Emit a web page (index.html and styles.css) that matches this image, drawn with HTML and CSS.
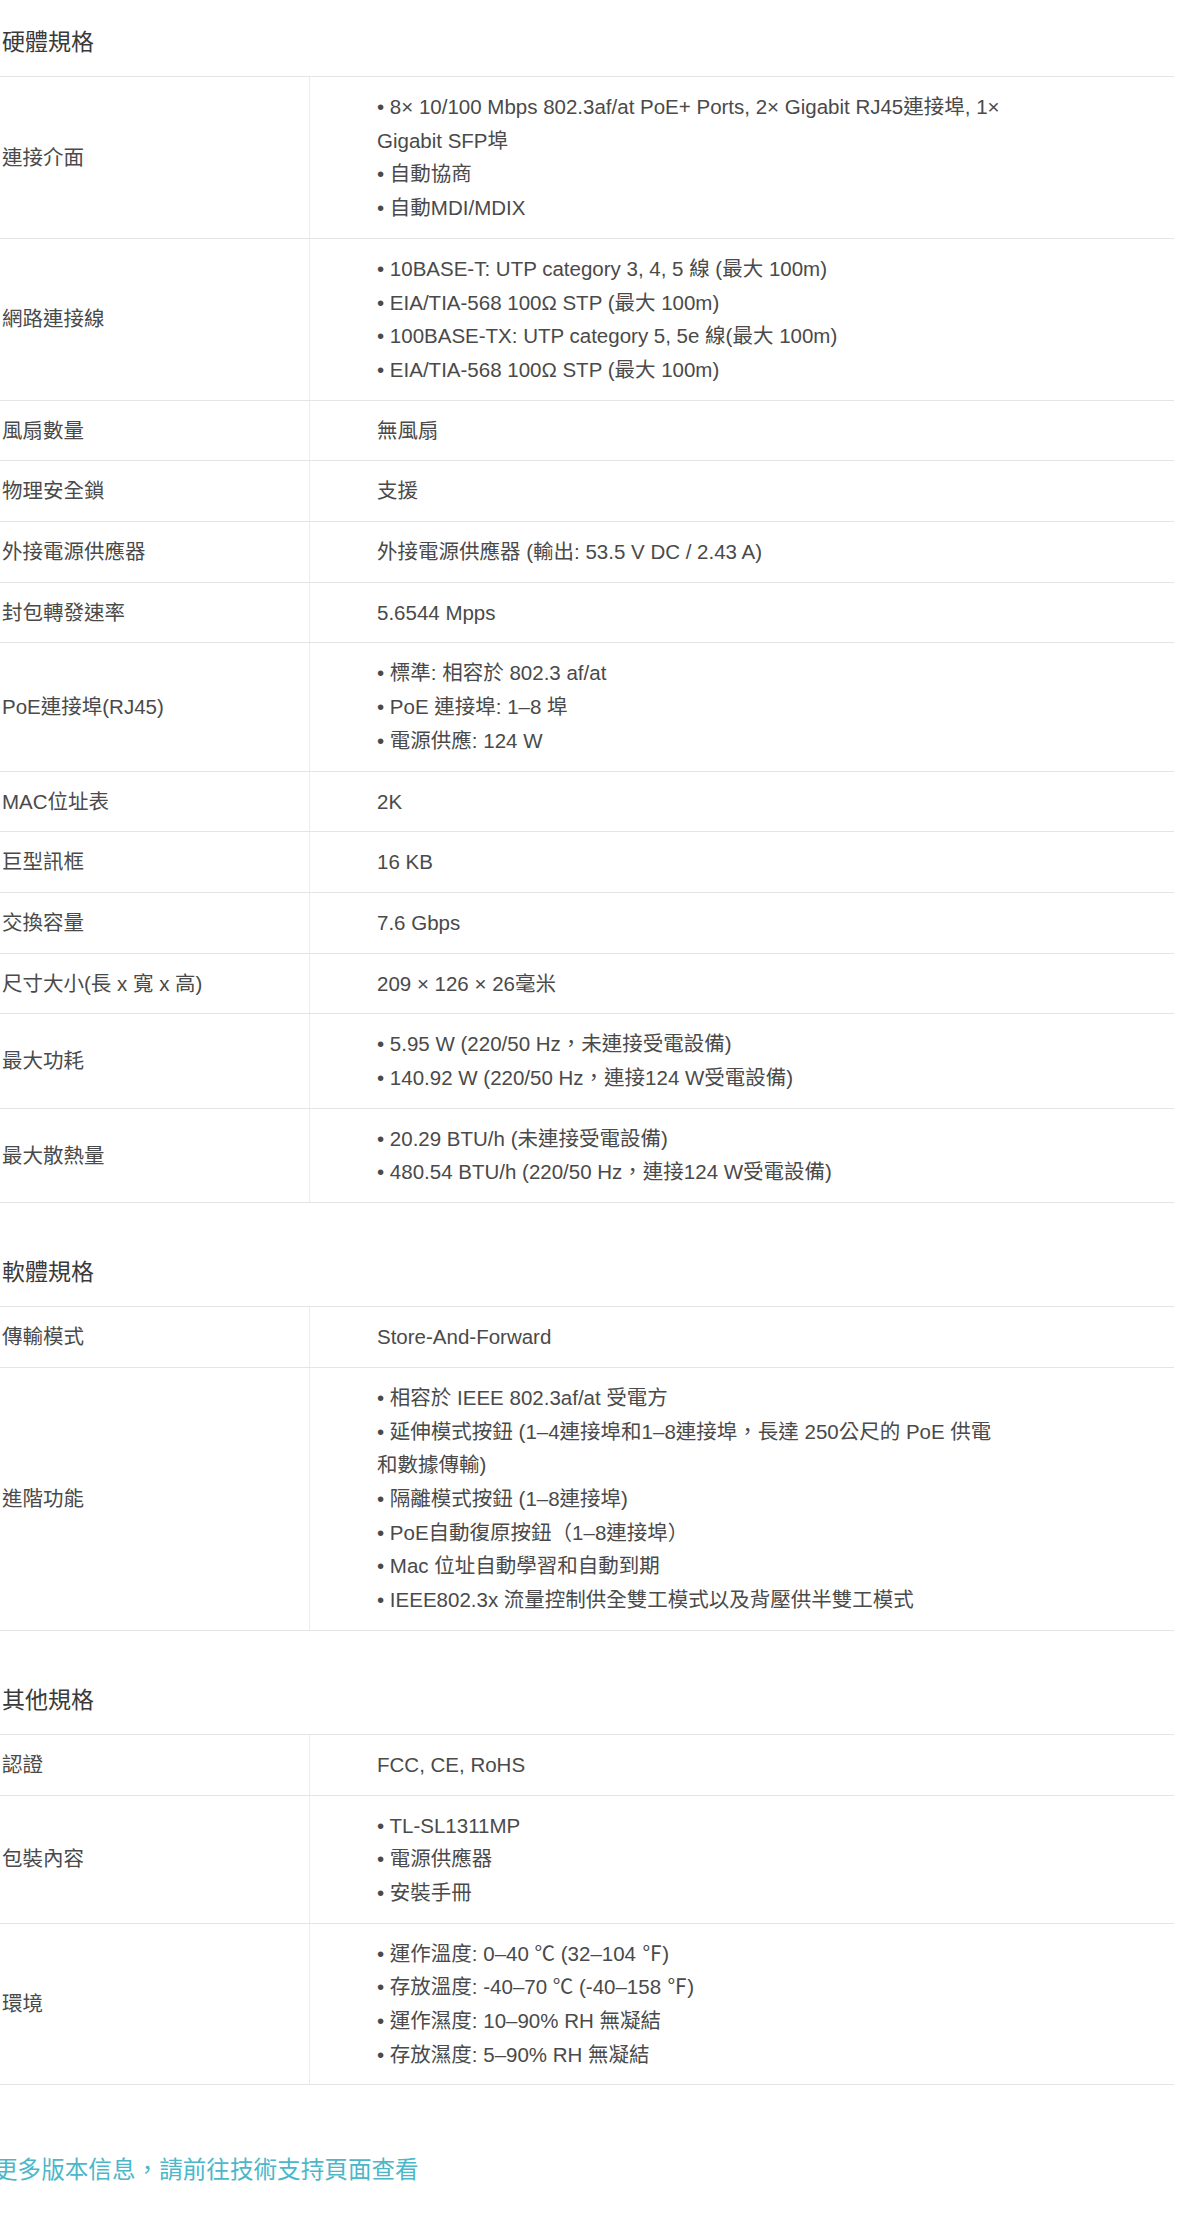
FILE: index.html
```html
<!DOCTYPE html>
<html lang="zh-Hant">
<head>
  <meta charset="UTF-8">
  <title>TL-SL1311MP 規格</title>
  <link rel="stylesheet" href="styles.css">
</head>
<body>

  <div class="specs">

    <!-- 硬體 -->
    <section class="spec-group">
      <h2 class="spec-title">硬體規格</h2>
      <div class="spec-table">
        <div class="spec-row">
          <div class="spec-name">連接介面</div>
          <div class="spec-value">
            <div>• 8× 10/100 Mbps 802.3af/at PoE+ Ports, 2× Gigabit RJ45連接埠, 1× Gigabit SFP埠</div>
            <div>• 自動協商</div>
            <div>• 自動MDI/MDIX</div>
          </div>
        </div>
        <div class="spec-row">
          <div class="spec-name">網路連接線</div>
          <div class="spec-value">
            <div>• 10BASE-T: UTP category 3, 4, 5 線 (最大 100m)</div>
            <div>• EIA/TIA-568 100Ω STP (最大 100m)</div>
            <div>• 100BASE-TX: UTP category 5, 5e 線(最大 100m)</div>
            <div>• EIA/TIA-568 100Ω STP (最大 100m)</div>
          </div>
        </div>
        <div class="spec-row">
          <div class="spec-name">風扇數量</div>
          <div class="spec-value">無風扇</div>
        </div>
        <div class="spec-row">
          <div class="spec-name">物理安全鎖</div>
          <div class="spec-value">支援</div>
        </div>
        <div class="spec-row">
          <div class="spec-name">外接電源供應器</div>
          <div class="spec-value">外接電源供應器 (輸出: 53.5 V DC / 2.43 A)</div>
        </div>
        <div class="spec-row">
          <div class="spec-name">封包轉發速率</div>
          <div class="spec-value">5.6544 Mpps</div>
        </div>
        <div class="spec-row">
          <div class="spec-name">PoE連接埠(RJ45)</div>
          <div class="spec-value">
            <div>• 標準: 相容於 802.3 af/at</div>
            <div>• PoE 連接埠: 1–8 埠</div>
            <div>• 電源供應: 124 W</div>
          </div>
        </div>
        <div class="spec-row">
          <div class="spec-name">MAC位址表</div>
          <div class="spec-value">2K</div>
        </div>
        <div class="spec-row">
          <div class="spec-name">巨型訊框</div>
          <div class="spec-value">16 KB</div>
        </div>
        <div class="spec-row">
          <div class="spec-name">交換容量</div>
          <div class="spec-value">7.6 Gbps</div>
        </div>
        <div class="spec-row">
          <div class="spec-name">尺寸大小(長 x 寬 x 高)</div>
          <div class="spec-value">209 × 126 × 26毫米</div>
        </div>
        <div class="spec-row">
          <div class="spec-name">最大功耗</div>
          <div class="spec-value">
            <div>• 5.95 W (220/50 Hz，未連接受電設備)</div>
            <div>• 140.92 W (220/50 Hz，連接124 W受電設備)</div>
          </div>
        </div>
        <div class="spec-row">
          <div class="spec-name">最大散熱量</div>
          <div class="spec-value">
            <div>• 20.29 BTU/h (未連接受電設備)</div>
            <div>• 480.54 BTU/h (220/50 Hz，連接124 W受電設備)</div>
          </div>
        </div>
      </div>
    </section>

    <!-- 軟體 -->
    <section class="spec-group">
      <h2 class="spec-title">軟體規格</h2>
      <div class="spec-table">
        <div class="spec-row">
          <div class="spec-name">傳輸模式</div>
          <div class="spec-value">Store-And-Forward</div>
        </div>
        <div class="spec-row">
          <div class="spec-name">進階功能</div>
          <div class="spec-value">
            <div>• 相容於 IEEE 802.3af/at 受電方</div>
            <div>• 延伸模式按鈕 (1–4連接埠和1–8連接埠，長達 250公尺的 PoE 供電和數據傳輸)</div>
            <div>• 隔離模式按鈕 (1–8連接埠)</div>
            <div>• PoE自動復原按鈕（1–8連接埠）</div>
            <div>• Mac 位址自動學習和自動到期</div>
            <div>• IEEE802.3x 流量控制供全雙工模式以及背壓供半雙工模式</div>
          </div>
        </div>
      </div>
    </section>

    <!-- 其他 -->
    <section class="spec-group">
      <h2 class="spec-title">其他規格</h2>
      <div class="spec-table">
        <div class="spec-row">
          <div class="spec-name">認證</div>
          <div class="spec-value">FCC, CE, RoHS</div>
        </div>
        <div class="spec-row">
          <div class="spec-name">包裝內容</div>
          <div class="spec-value">
            <div>• TL-SL1311MP</div>
            <div>• 電源供應器</div>
            <div>• 安裝手冊</div>
          </div>
        </div>
        <div class="spec-row">
          <div class="spec-name">環境</div>
          <div class="spec-value">
            <div>• 運作溫度: 0–40 ℃ (32–104 ℉)</div>
            <div>• 存放溫度: -40–70 ℃ (-40–158 ℉)</div>
            <div>• 運作濕度: 10–90% RH 無凝結</div>
            <div>• 存放濕度: 5–90% RH 無凝結</div>
          </div>
        </div>
      </div>
    </section>

    <a class="more-link" href="#">更多版本信息，請前往技術支持頁面查看</a>

  </div>

</body>
</html>
```

FILE: styles.css
```css
body {
  margin: 0;
  background: #fff;
  font-family: "Liberation Sans", "Noto Sans CJK TC", Arial, sans-serif;
  color: #4a4a4a;
}

.specs {
  width: 1174px;
}

.spec-group + .spec-group {
  margin-top: 27px;
}

.spec-title {
  margin: 0;
  padding: 25px 0 17px 2px;
  font-size: 23px;
  line-height: 34px;
  font-weight: normal;
  color: #3a3a3a;
}

.spec-table {
  border-top: 1px solid #e4e4e4;
}

.spec-row {
  display: grid;
  grid-template-columns: 310px 1fr;
  border-bottom: 1px solid #e4e4e4;
  font-size: 20.5px;
  line-height: 33.7px;
}

.spec-name {
  display: flex;
  align-items: center;
  padding-left: 2px;
  border-right: 1px solid #ececec;
}

.spec-value {
  padding: 13px 168px 13px 67px;
}

.more-link {
  display: block;
  margin: 68px 0 0 -6px;
  font-size: 23.6px;
  line-height: 34px;
  color: #4bb7c9;
  text-decoration: none;
}
```
